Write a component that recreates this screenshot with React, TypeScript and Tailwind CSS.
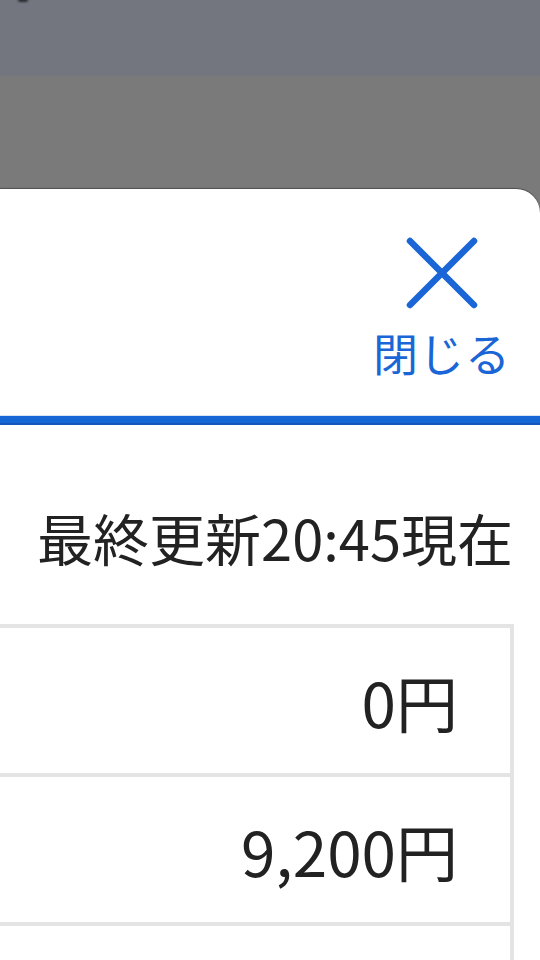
import React from "react";

const jp = { fontFamily: '"Noto Sans CJK JP", "Noto Sans", sans-serif' };

export default function App() {
  return (
    <div className="w-[540px] h-[960px] overflow-hidden bg-[#7a7a7a] flex flex-col" style={jp}>
      <div className="h-[76px] shrink-0 bg-[#73767f] relative">
        <div className="absolute left-[18px] top-[-3px] w-[10px] h-[5px] rounded-full bg-[#2a2b30] blur-[1px]" />
      </div>
      <div className="h-[113px] shrink-0" />
      <div className="flex-1 bg-white rounded-tr-[24px] shadow-[0_-1px_1px_rgba(0,0,0,0.35)] flex flex-col">
        <div className="h-[226px] shrink-0 flex justify-end pr-[29px] pt-[47px]">
          <button className="flex flex-col items-center text-[#1a66d6]">
            <svg width="74" height="74" viewBox="0 0 74 74" fill="none">
              <path d="M5 5 L69 69 M69 5 L5 69" stroke="#1a66d6" strokeWidth="6.5" strokeLinecap="round" />
            </svg>
            <span className="mt-[20px] text-[45px] leading-[45px] tracking-[1px]">閉じる</span>
          </button>
        </div>
        <div className="h-[1px] bg-[#d9e4f3]" />
        <div className="h-[9px] bg-[#1766d6] border-b-[2px] border-[#1456bd]" />
        <div className="pt-[84px] pr-[27px] flex justify-end">
          <span className="text-[56px] leading-[56px] text-[#222222]">最終更新20:45現在</span>
        </div>
        <div className="mt-[59px] mr-[26px] border-t-[4px] border-r-[4px] border-[#e4e4e4] flex flex-col">
          <div className="h-[149px] shrink-0 flex items-center justify-end pr-[52px] border-b-[4px] border-[#e4e4e4]">
            <span className="text-[62px] leading-[62px] text-[#222222]">0円</span>
          </div>
          <div className="h-[149px] shrink-0 flex items-center justify-end pr-[52px] border-b-[4px] border-[#e4e4e4]">
            <span className="text-[62px] leading-[62px] text-[#222222]">9,200円</span>
          </div>
          <div className="h-[149px] shrink-0 flex items-center justify-end pr-[52px]" />
        </div>
      </div>
    </div>
  );
}
